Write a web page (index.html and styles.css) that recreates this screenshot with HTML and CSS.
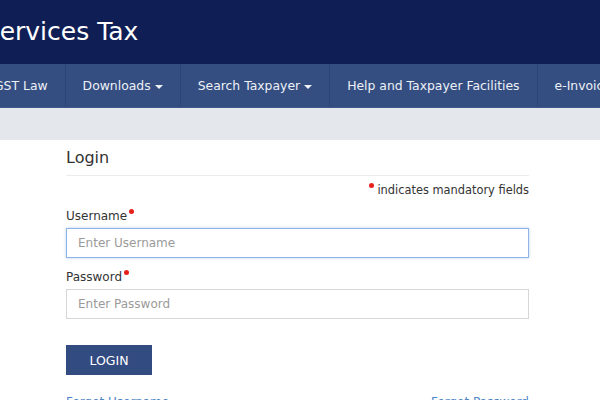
FILE: index.html
```html
<!DOCTYPE html>
<html lang="en">
<head>
  <meta charset="UTF-8">
  <meta name="viewport" content="width=device-width, initial-scale=1.0">
  <title>Login | Goods and Services Tax</title>
  <link rel="stylesheet" href="styles.css">
</head>
<body>
  <header class="site-header">
    <div class="brand">Goods and Services Tax</div>
  </header>

  <nav class="main-nav">
    <a class="nav-item" href="#">GST Law</a>
    <a class="nav-item" href="#">Downloads<span class="caret"></span></a>
    <a class="nav-item" href="#">Search Taxpayer<span class="caret"></span></a>
    <a class="nav-item" href="#">Help and Taxpayer Facilities</a>
    <a class="nav-item" href="#">e-Invoice</a>
  </nav>

  <div class="breadcrumb-bar"></div>

  <div class="login-box">
    <h4 class="login-title">Login</h4>
    <p class="mandatory"><span class="req-dot"></span> indicates mandatory fields</p>

    <form class="login-form" onsubmit="return false">
      <label class="field-label" for="username">Username<span class="req-dot"></span></label>
      <input class="field-input is-focused" id="username" type="text" placeholder="Enter Username">

      <label class="field-label" for="password">Password<span class="req-dot"></span></label>
      <input class="field-input" id="password" type="password" placeholder="Enter Password">

      <button class="btn-login" type="submit">LOGIN</button>
    </form>

    <div class="forgot-links">
      <a href="#">Forgot Username</a>
      <a href="#">Forgot Password</a>
    </div>
  </div>
</body>
</html>
```

FILE: styles.css
```css
body {
  font-family: "DejaVu Sans", Verdana, sans-serif;
  margin: 0;
  padding: 0;
  background: #fff;
  color: #333;
  overflow: hidden;
}
.site-header {
  height: 64px;
  background-color: #0f1f55;
  color: #fff;
  overflow: hidden;
  white-space: nowrap;
  box-sizing: border-box;
  padding-top: 17px;
}
.brand {
  font-size: 25px;
  line-height: 29px;
  margin-left: -158px;
}
.main-nav {
  display: flex;
  height: 43px;
  background-color: #344e82;
  border-bottom: 1px solid #3f5889;
  white-space: nowrap;
  overflow: hidden;
  margin-left: -23px;
}
.nav-item {
  flex: none;
  padding: 0 17px;
  line-height: 43px;
  font-size: 12.4px;
  color: #eef1f6;
  text-decoration: none;
  border-right: 1px solid #2c4476;
}
.caret {
  display: inline-block;
  width: 0;
  height: 0;
  margin-left: 4px;
  vertical-align: middle;
  border-top: 4px solid #eef1f6;
  border-left: 4px solid transparent;
  border-right: 4px solid transparent;
}
.breadcrumb-bar {
  height: 32px;
  background-color: #e4e8ec;
}
.login-box {
  width: 463px;
  margin-left: 66px;
}
.login-title {
  margin: 0;
  padding: 8px 0 7px;
  font-size: 16px;
  line-height: 20px;
  font-weight: normal;
  color: #333;
  border-bottom: 1px solid #ececec;
}
.mandatory {
  margin: 6px 0 0;
  text-align: right;
  font-size: 11.4px;
  line-height: 16px;
  color: #333;
}
.req-dot {
  display: inline-block;
  width: 5px;
  height: 5px;
  border-radius: 50%;
  background: #e8201a;
  vertical-align: 6px;
  margin-left: 2px;
}
.mandatory .req-dot {
  margin: 0;
}
.login-form {
  display: flex;
  flex-direction: column;
  align-items: flex-start;
  margin-top: 10px;
}
.field-label {
  font-size: 12px;
  line-height: 16px;
  color: #333;
  margin-bottom: 4px;
}
.field-input {
  box-sizing: border-box;
  width: 100%;
  height: 30px;
  padding: 0 11px;
  border: 1px solid #d6d6d6;
  font-family: inherit;
  font-size: 12px;
  color: #333;
  outline: none;
  margin-bottom: 11px;
}
.field-input::placeholder {
  color: #9a9a9a;
}
.field-input.is-focused {
  border-color: #8fb5e8;
  box-shadow: 0 0 3px rgba(102, 155, 225, 0.45);
}
.btn-login {
  margin-top: 15px;
  width: 86px;
  height: 30px;
  border: none;
  background-color: #324b80;
  color: #fff;
  font-family: inherit;
  font-size: 12.5px;
  cursor: pointer;
}
.forgot-links {
  display: flex;
  justify-content: space-between;
  margin-top: 19px;
  font-size: 12px;
  line-height: 16px;
}
.forgot-links a {
  color: #4f86c6;
  text-decoration: none;
}
```
